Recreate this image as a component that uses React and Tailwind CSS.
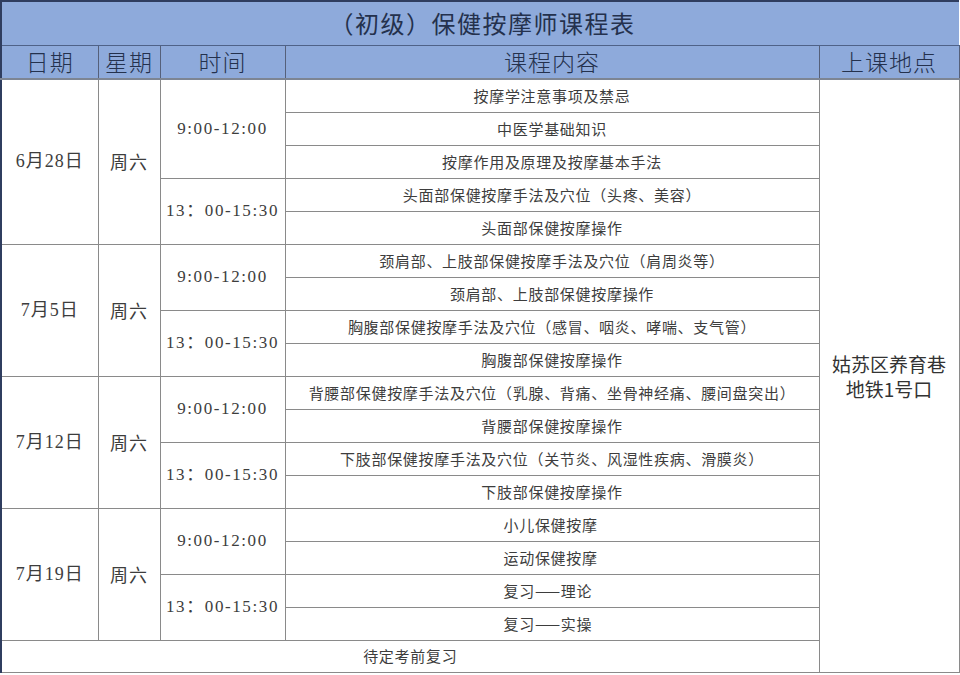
import React from 'react';

const days = [
  {
    date: '6月28日',
    slots: [
      { time: '9:00-12:00', items: ['按摩学注意事项及禁忌', '中医学基础知识', '按摩作用及原理及按摩基本手法'] },
      { time: '13：00-15:30', items: ['头面部保健按摩手法及穴位（头疼、美容）', '头面部保健按摩操作'] },
    ],
  },
  {
    date: '7月5日',
    slots: [
      { time: '9:00-12:00', items: ['颈肩部、上肢部保健按摩手法及穴位（肩周炎等）', '颈肩部、上肢部保健按摩操作'] },
      { time: '13：00-15:30', items: ['胸腹部保健按摩手法及穴位（感冒、咽炎、哮喘、支气管）', '胸腹部保健按摩操作'] },
    ],
  },
  {
    date: '7月12日',
    slots: [
      { time: '9:00-12:00', items: ['背腰部保健按摩手法及穴位（乳腺、背痛、坐骨神经痛、腰间盘突出）', '背腰部保健按摩操作'] },
      { time: '13：00-15:30', items: ['下肢部保健按摩手法及穴位（关节炎、风湿性疾病、滑膜炎）', '下肢部保健按摩操作'] },
    ],
  },
  {
    date: '7月19日',
    left: true,
    slots: [
      { time: '9:00-12:00', items: ['小儿保健按摩', '运动保健按摩'] },
      { time: '13：00-15:30', items: ['复习——理论', '复习——实操'] },
    ],
  },
];

const cjk = { fontFamily: '"Noto Sans CJK SC", "Noto Sans", sans-serif' };
const serif = { fontFamily: '"Liberation Serif", "Noto Sans CJK SC", serif' };

const App = () => {
  const total = days.reduce((n, d) => n + d.slots.reduce((m, s) => m + s.items.length, 0), 0) + 1;
  let first = true;

  return (
    <div className="w-[960px] h-[675px] overflow-hidden bg-white">
      <table className="w-[958px] table-fixed border-collapse border-t-2 border-l-2 border-[#2f3d5f]" style={cjk}>
        <colgroup>
          <col className="w-[97px]" />
          <col className="w-[62px]" />
          <col className="w-[125px]" />
          <col className="w-[534px]" />
          <col className="w-[140px]" />
        </colgroup>
        <thead className="bg-[#8eaadb] text-[#24314d]">
          {/* title */}
          <tr className="h-[44px]">
            <th colSpan={5} className="border-b border-[#4f6288] font-normal text-[24px] tracking-[1.5px] pl-1">
              （初级）保健按摩师课程表
            </th>
          </tr>
          <tr className="h-[34px]">
            {['日期', '星期', '时间', '课程内容', '上课地点'].map((h, i) => (
              <th
                key={i}
                className="border-b-2 border-r border-b-[#7d8593] border-r-[#55607a] font-light text-[23px] leading-none tracking-[1px]"
              >
                {h}
              </th>
            ))}
          </tr>
        </thead>
        <tbody className="text-[#3d3d3d]">
          {days.map((d, di) => {
            const dayRows = d.slots.reduce((m, s) => m + s.items.length, 0);
            return d.slots.map((s, si) =>
              s.items.map((item, ii) => {
                const showLoc = first;
                first = false;
                return (
                  <tr key={`${di}-${si}-${ii}`} className="h-[33px]">
                    {si === 0 && ii === 0 && (
                      <>
                        <td rowSpan={dayRows} className="border border-[#8a8a8a] text-center text-[18px] tracking-[1px]" style={serif}>
                          {d.date}
                        </td>
                        <td rowSpan={dayRows} className="border border-[#8a8a8a] text-center text-[18px] tracking-[1px]" style={cjk}>
                          周六
                        </td>
                      </>
                    )}
                    {ii === 0 && (
                      <td rowSpan={s.items.length} className="border border-[#8a8a8a] text-center text-[17px] tracking-[1.6px]" style={serif}>
                        {s.time}
                      </td>
                    )}
                    <td
                      className={`border border-[#8a8a8a] text-[15px] tracking-[0.7px] leading-none whitespace-nowrap ${
                        d.left ? 'text-left pl-[218px]' : 'text-center'
                      }`}
                    >
                      {item}
                    </td>
                    {showLoc && (
                      <td rowSpan={total} className="border border-[#8a8a8a] text-center text-[19px] leading-[25px] text-[#333]">
                        <div>姑苏区养育巷</div>
                        <div>地铁1号口</div>
                      </td>
                    )}
                  </tr>
                );
              })
            );
          })}
          <tr className="h-[32px]">
            <td colSpan={4} className="border border-[#8a8a8a] text-center text-[15px] tracking-[0.7px]">
              待定考前复习
            </td>
          </tr>
        </tbody>
      </table>
    </div>
  );
};

export default App;
